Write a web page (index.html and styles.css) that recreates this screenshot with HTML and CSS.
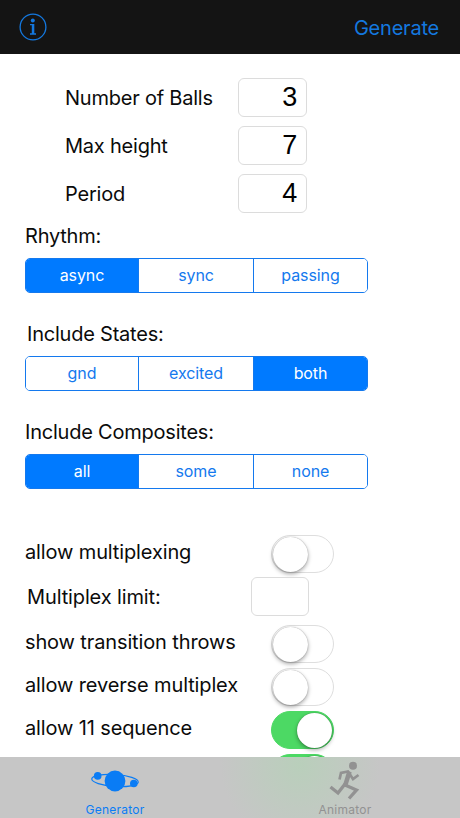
FILE: index.html
```
<!DOCTYPE html>
<html lang="en">
<head>
  <meta charset="UTF-8" />
  <meta name="viewport" content="width=device-width, initial-scale=1.0"/>
  <title>Siteswap Generator</title>
  <link rel="stylesheet" href="styles.css">
</head>
<body>

  <header class="navbar">
    <svg class="info-icon" viewBox="0 0 28 28">
      <circle cx="14" cy="14" r="12.9" fill="none" stroke="currentColor" stroke-width="1.3"/>
      <circle cx="13.8" cy="7.5" r="2" fill="currentColor"/>
      <path d="M11 11.6H14.6M11 21H17" fill="none" stroke="currentColor" stroke-width="1.3"/>
      <path d="M12.8 11H15.3V21H12.8Z" fill="currentColor"/>
    </svg>
    <a class="generate">Generate</a>
  </header>

  <main>
    <section class="numbers">
      <div class="number-row"><label>Number of Balls</label><div class="field">3</div></div>
      <div class="number-row"><label>Max height</label><div class="field">7</div></div>
      <div class="number-row"><label>Period</label><div class="field">4</div></div>
    </section>

    <section class="choice">
      <h2>Rhythm:</h2>
      <div class="segments">
        <button class="active">async</button>
        <button>sync</button>
        <button>passing</button>
      </div>
    </section>

    <section class="choice">
      <h2 class="indent">Include States:</h2>
      <div class="segments">
        <button>gnd</button>
        <button>excited</button>
        <button class="active">both</button>
      </div>
    </section>

    <section class="choice">
      <h2>Include Composites:</h2>
      <div class="segments">
        <button class="active">all</button>
        <button>some</button>
        <button>none</button>
      </div>
    </section>

    <section class="options">
      <div class="option first"><label>allow multiplexing</label><div class="switch"></div></div>
      <div class="option limit"><label>Multiplex limit:</label><div class="field"></div></div>
      <div class="option"><label>show transition throws</label><div class="switch"></div></div>
      <div class="option"><label>allow reverse multiplex</label><div class="switch"></div></div>
      <div class="option"><label>allow 11 sequence</label><div class="switch on"></div></div>
      <div class="option"><label></label><div class="switch on"></div></div>
    </section>
  </main>

  <nav class="tabbar">
    <a class="tab selected">
      <svg viewBox="0 0 50 36">
        <ellipse cx="25" cy="18.5" rx="23.3" ry="6" transform="rotate(4 25 18.5)" fill="none" stroke="currentColor" stroke-width="1.2"/>
        <circle cx="25" cy="19" r="10.4" fill="currentColor"/>
        <circle cx="7.7" cy="13.9" r="3.8" fill="currentColor"/>
        <circle cx="43.8" cy="21.5" r="3.8" fill="currentColor"/>
      </svg>
      <span>Generator</span>
    </a>
    <a class="tab">
      <svg viewBox="0 0 50 36">
        <circle cx="33" cy="3.7" r="4" fill="currentColor"/>
        <path d="M19.5 17.5L21 11L28 9.5L33 17L38.5 13" fill="none" stroke="currentColor" stroke-width="2.7"/>
        <path d="M29.5 9.5L25 24" fill="none" stroke="currentColor" stroke-width="4.5"/>
        <path d="M25 22L18 31L10.5 25M25 23L36.5 28L29 36.5" fill="none" stroke="currentColor" stroke-width="3.3"/>
      </svg>
      <span>Animator</span>
    </a>
  </nav>

</body>
</html>
```
FILE: styles.css
```
* {
  box-sizing: border-box;
}

body {
  margin: 0;
  height: 818px;
  display: flex;
  flex-direction: column;
  overflow: hidden;
  background: #fff;
  color: #0b0b0b;
  font-family: Inter, "Liberation Sans", sans-serif;
  font-size: 20px;
  letter-spacing: -0.22px;
}

.navbar {
  flex: none;
  height: 54px;
  padding: 0 21px 0 19px;
  display: flex;
  align-items: center;
  justify-content: space-between;
  background: #141414;
  color: #1478df;
}

.info-icon {
  width: 28px;
  height: 28px;
}

.generate {
  font-size: 20px;
  padding-top: 1px;
}

main {
  flex: 1;
  min-height: 0;
  overflow: hidden;
  padding: 24px 0 0 25px;
}

.numbers {
  display: grid;
  gap: 10px;
  margin-left: 40px;
}

.number-row {
  display: flex;
  height: 38px;
  align-items: center;
}

.number-row label {
  width: 173px;
  padding-top: 2px;
}

.field {
  width: 69px;
  height: 39px;
  padding-right: 9px;
  border: 1px solid #dcdcdc;
  border-radius: 6px;
  font: 27px/37px "Liberation Sans", sans-serif;
  color: #000;
  text-align: right;
}

.choice {
  width: 343px;
  height: 98px;
  padding-top: 12px;
}

.choice h2 {
  margin: 0 0 10px;
  font-size: 20px;
  font-weight: normal;
  line-height: 24px;
}

.choice .indent {
  padding-left: 2px;
}

.segments {
  display: grid;
  grid-template-columns: 112px 115px 1fr;
  height: 35px;
  border: 1px solid #1479ee;
  border-radius: 5px;
  overflow: hidden;
}

.segments button {
  padding: 0 0 2px;
  border: 0;
  border-left: 1px solid #1479ee;
  background: #fff;
  color: #1479ee;
  font: 16px Inter, "Liberation Sans", sans-serif;
  letter-spacing: -0.1px;
}

.segments button:first-child {
  border-left: 0;
}

.segments .active {
  background: #007aff;
  color: #fff;
}

.options {
  margin-top: 27px;
  letter-spacing: -0.13px;
}

.option {
  display: flex;
  align-items: center;
  height: 43px;
}

.option label {
  width: 246px;
  padding-bottom: 3px;
}

.first {
  height: 42px;
}

.first label {
  padding-bottom: 5px;
}

.limit {
  height: 47px;
  align-items: flex-start;
  padding-top: 2px;
}

.limit label {
  width: 226px;
  padding: 8px 0 0 2px;
}

.limit .field {
  width: 58px;
}

.switch {
  width: 63px;
  height: 38px;
  padding: 1px;
  border: 1px solid #dedede;
  border-radius: 19px;
}

.switch::before {
  content: "";
  display: block;
  width: 35px;
  height: 35px;
  border-radius: 50%;
  background: #fff;
  box-shadow: 0 2px 4px rgba(0, 0, 0, 0.35), 0 0 1px rgba(0, 0, 0, 0.4);
}

.switch.on {
  border-color: #4cd964;
  background: #4cd964;
}

.switch.on::before {
  margin-left: 24px;
}

.tabbar {
  flex: none;
  height: 61px;
  display: grid;
  grid-template-columns: 1fr 1fr;
  background: radial-gradient(ellipse 80px 80px at 300px 8px, #b9cfbb, rgba(198, 198, 198, 0)) #c6c6c6;
}

.tab {
  display: flex;
  flex-direction: column;
  align-items: center;
  padding-top: 5px;
  color: #929292;
  font-size: 12px;
  letter-spacing: 0.25px;
}

.tab svg {
  width: 50px;
  height: 36px;
  overflow: visible;
}

.tab span {
  line-height: 15px;
  margin-top: 4px;
}

.selected {
  color: #0a7cf5;
}
```
